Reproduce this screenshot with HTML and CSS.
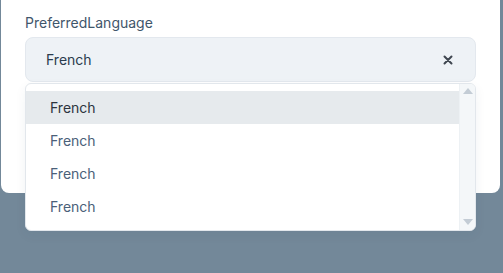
FILE: index.html
```html
<!DOCTYPE html>
<html>
    <head>
        <title>
            language
        </title>
        <link rel="stylesheet" href="styles.css">
    </head>
    <body>
        <div class="card">
            <p class="label">PreferredLanguage</p>
            <div class="field">
                <div class="select">
                    <span class="value">French</span>
                    <svg class="clear" width="10" height="10" viewBox="0 0 10 10">
                        <path d="M1.5 1.5 L8.5 8.5 M8.5 1.5 L1.5 8.5" stroke="#3f4650" stroke-width="2" stroke-linecap="round"/>
                    </svg>
                </div>
                <div class="menu">
                    <ul class="options">
                        <li class="option active">French</li>
                        <li class="option">French</li>
                        <li class="option">French</li>
                        <li class="option">French</li>
                    </ul>
                    <div class="scrollbar">
                        <span class="arrow up"></span>
                        <span class="arrow down"></span>
                    </div>
                </div>
            </div>
        </div>
    </body>
</html>
```

FILE: styles.css
```css
html, body{
    overflow: visible;
    height: 100%;
}
body{
    margin: 0;
    background-color: #738899;
    font-family: Inter, "Noto Sans", sans-serif;
}
p{
    margin: 0;
}
.card{
    background-color: white;
    margin: 0 3px 0 1px;
    height: 193px;
    box-sizing: border-box;
    border-radius: 0 0 8px 8px;
    padding: 14px 24px 0 24px;
    overflow: visible;
}
.label{
    font-size: 14px;
    line-height: 17px;
    color: #3f566b;
}
.field{
    position: relative;
    margin-top: 6px;
    z-index: 5;
}
.select{
    height: 45px;
    box-sizing: border-box;
    background-color: #eef2f6;
    border: 1px solid #e3e8ee;
    border-radius: 8px;
    display: flex;
    align-items: center;
    justify-content: space-between;
    padding: 0 22px 0 20px;
}
.value{
    font-size: 14px;
    color: #2a3b4d;
}
.menu{
    position: absolute;
    top: 46px;
    left: 0;
    right: 0;
    z-index: 10;
    height: 148px;
    box-sizing: border-box;
    background-color: white;
    border: 1px solid #e2e7ec;
    border-radius: 6px;
    box-shadow: 0 4px 12px rgba(40, 60, 80, 0.06);
    display: flex;
    overflow: hidden;
}
.options{
    list-style: none;
    margin: 0;
    padding: 7px 0 0 0;
    flex: 1;
}
.option{
    height: 33px;
    display: flex;
    align-items: center;
    padding-left: 24px;
    font-size: 14px;
    color: #4a6079;
}
.option.active{
    background-color: #e6eaed;
    color: #2c343e;
}
.scrollbar{
    width: 15px;
    background-color: #f4f7f9;
    border-left: 1px solid #edf1f4;
    display: flex;
    flex-direction: column;
    justify-content: space-between;
    align-items: center;
    padding: 4px 0 5px 0;
}
.arrow{
    width: 0;
    height: 0;
    border-left: 5px solid transparent;
    border-right: 5px solid transparent;
}
.arrow.up{
    border-bottom: 6px solid #c3ccd5;
}
.arrow.down{
    border-top: 6px solid #c3ccd5;
}
```
